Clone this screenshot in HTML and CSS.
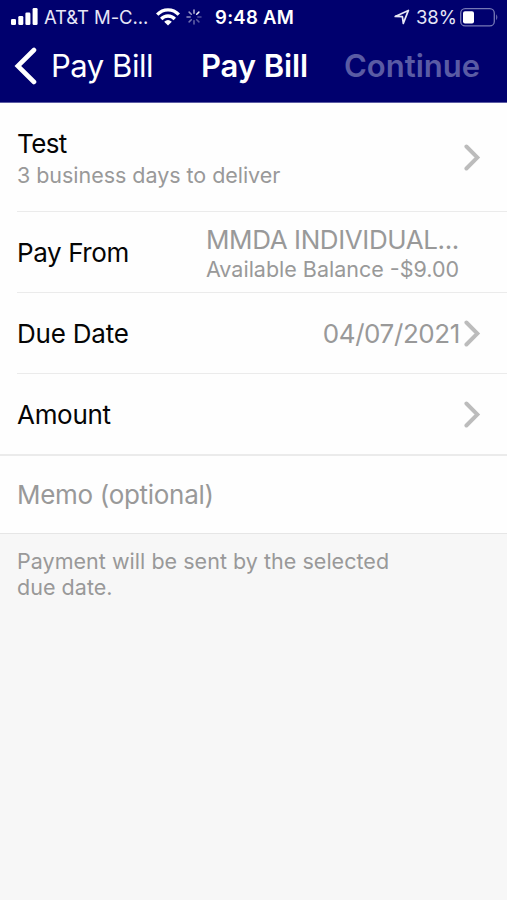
FILE: index.html
```html
<!DOCTYPE html>
<html lang="en">
<head>
<meta charset="utf-8">
<title>Pay Bill</title>
<link rel="stylesheet" href="styles.css">
</head>
<body>
<header class="header">
  <div class="status">
    <svg class="signal" width="27" height="17" viewBox="0 0 27 17" fill="#fff"><rect x="0" y="11" width="5" height="6" rx="1.3"/><rect x="7.3" y="8" width="5" height="9" rx="1.3"/><rect x="14.4" y="4.5" width="5" height="12.5" rx="1.3"/><rect x="21.6" y="0" width="5" height="17" rx="1.3"/></svg>
    <span class="carrier">AT&amp;T M-C...</span>
    <svg class="wifi" width="24" height="18" viewBox="0 0 24 18" fill="none" stroke="#fff" stroke-width="3.3"><path d="M1.2 6.7C7.2.2 16.8.2 22.8 6.7"/><path d="M5.2 11C9 7 15 7 18.8 11"/><path d="M12 17.5L8.2 13.7Q12 10.5 15.8 13.7Z" fill="#fff" stroke="none"/></svg>
    <svg class="spinner" width="16" height="16" viewBox="-8 -8 16 16" stroke="#fff" stroke-width="1.5" stroke-linecap="round"><path d="M0-3.8V-7" opacity=".7"/><path d="M2.7-2.7L4.9-4.9" opacity=".95"/><path d="M3.8 0H7" opacity=".3"/><path d="M2.7 2.7L4.9 4.9" opacity=".35"/><path d="M0 3.8V7" opacity=".4"/><path d="M-2.7 2.7L-4.9 4.9" opacity=".45"/><path d="M-3.8 0H-7" opacity=".55"/><path d="M-2.7-2.7L-4.9-4.9" opacity=".6"/></svg>
    <span class="time">9:48 AM</span>
    <svg class="location" width="16" height="16" viewBox="0 0 16 16" fill="none" stroke="#e6e6f6" stroke-width="1.7" stroke-linejoin="round"><path d="M1.2 7.4L14.4 1.4L9.3 14.4L8.4 7.6Z"/></svg>
    <span class="percent">38%</span>
    <svg class="battery" width="39" height="19" viewBox="0 0 39 19"><rect x=".7" y=".7" width="33.6" height="17.2" rx="4.5" fill="none" stroke="#7678b5" stroke-width="1.3"/><rect x="3" y="3.2" width="11" height="12.2" rx="2" fill="#fff"/><path d="M36.2 6.3Q38.5 9.3 36.2 12.3Z" fill="#7678b5"/></svg>
  </div>
  <nav class="nav">
    <svg class="back-icon" width="24" height="38" viewBox="0 0 24 38" fill="none" stroke="#fff" stroke-width="4.6" stroke-linecap="round" stroke-linejoin="miter"><path d="M21 3L4.8 19L21 35"/></svg>
    <span class="back">Pay Bill</span>
    <h1 class="title">Pay Bill</h1>
    <span class="continue">Continue</span>
  </nav>
</header>
<main>
  <section class="form">
    <div class="row payee">
      <div class="stack"><span class="label test">Test</span><span class="sub deliver">3 business days to deliver</span></div>
      <svg class="chevron" width="17" height="27" viewBox="0 0 17 27"><path d="M2.4 2.5L13.4 13.5L2.4 24.5"/></svg>
    </div>
    <div class="row account">
      <span class="label from">Pay From</span>
      <div class="stack"><span class="value acct">MMDA INDIVIDUAL...</span><span class="sub balance">Available Balance -$9.00</span></div>
    </div>
    <div class="row">
      <span class="label due">Due Date</span>
      <span class="value date">04/07/2021</span>
      <svg class="chevron" width="17" height="27" viewBox="0 0 17 27"><path d="M2.4 2.5L13.4 13.5L2.4 24.5"/></svg>
    </div>
    <div class="row amount">
      <span class="label amt">Amount</span>
      <svg class="chevron" width="17" height="27" viewBox="0 0 17 27"><path d="M2.4 2.5L13.4 13.5L2.4 24.5"/></svg>
    </div>
  </section>
  <div class="memo"><span class="value memo-text">Memo (optional)</span></div>
  <p class="note">Payment will be sent by the selected<br>due date.</p>
</main>
</body>
</html>
```

FILE: styles.css
```css
* { box-sizing: border-box; }
body { margin: 0; min-height: 900px; background: #f7f7f7; color: #050505; font-family: Inter, "Liberation Sans", sans-serif; white-space: nowrap; }
svg { display: block; flex: none; }

.header { height: 103px; background: #00006e; color: #fff; border-bottom: 1px solid #5c5ca4; }
.status { height: 34px; display: flex; align-items: center; padding-left: 11px; font-size: 18.5px; line-height: 34px; }
.signal { margin-top: -1px; }
.carrier { width: 105px; margin-left: 6px; color: #e6e6f6; letter-spacing: -0.1px; }
.wifi { margin-left: 7px; }
.spinner { margin-left: 6px; }
.time { width: 80px; margin-left: 13px; font-weight: 600; letter-spacing: 0.3px; }
.location { margin-left: 99px; }
.percent { width: 41px; margin-left: 6px; color: #e6e6f6; letter-spacing: -0.1px; }
.battery { margin-left: 3px; }

.nav { height: 63px; display: flex; align-items: center; padding-left: 14px; font-size: 31px; line-height: 63px; }
.back-icon { margin-left: -1px; }
.back { width: 103px; margin-left: 14px; letter-spacing: -0.45px; }
.title { width: 108px; margin: 0 0 0 47px; font-size: 31px; font-weight: 600; letter-spacing: -0.1px; }
.continue { margin-left: 35px; color: #5a5ba4; font-weight: 600; }

.form { padding-left: 17px; background: #fefefe; }
.row { height: 81px; display: flex; align-items: center; padding: 1px 26px 0 0; border-bottom: 1px solid #ebebeb; }
.payee { height: 109px; }
.payee .stack { padding-top: 3px; }
.amount { height: 80px; border-bottom: 0; }
.stack { display: flex; flex-direction: column; }
.label, .value { font-size: 26px; line-height: 32px; }
.label { letter-spacing: -0.3px; }
.test { letter-spacing: -0.6px; }
.value, .sub, .note { color: #999; }
.sub { font-size: 21.5px; line-height: 30px; }
.deliver { letter-spacing: -0.04px; }
.from { padding-top: 1px; letter-spacing: -0.4px; }
.chevron { margin-left: auto; fill: none; stroke: #bcbcbc; stroke-width: 3.9; stroke-linecap: round; }
.account .stack { width: 254px; margin-left: auto; margin-right: 21px; padding-top: 1px; }
.acct { letter-spacing: -0.4px; }
.account .sub { line-height: 28px; margin-top: -1px; }
.account .acct { padding-top: 1px; }
.due, .date { padding-top: 1px; }
.due { letter-spacing: -0.2px; }
.date { margin-left: auto; letter-spacing: -0.4px; }
.date + .chevron { margin-left: 4px; }

.memo { height: 80px; display: flex; align-items: center; padding-left: 17px; background: #fefefe; border-top: 2px solid #ebebeb; border-bottom: 1px solid #e6e6e6; }
.memo-text { letter-spacing: -0.3px; }
.note { margin: 0; padding: 14px 17px; font-size: 21.5px; line-height: 26px; letter-spacing: 0.03px; }
```
